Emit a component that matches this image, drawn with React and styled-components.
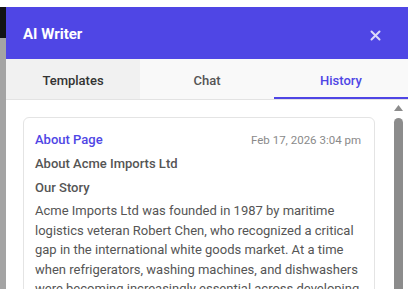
import React, { useState } from 'react';
import styled, { createGlobalStyle } from 'styled-components';

const GlobalStyle = createGlobalStyle`
  html, body {
    margin: 0;
    padding: 0;
    overflow: hidden;
    background: #a4a4a4;
    font-family: Roboto, "Noto Sans", sans-serif;
  }
`;

const tabs = ['Templates', 'Chat', 'History'];

const story =
  'Acme Imports Ltd was founded in 1987 by maritime logistics veteran Robert Chen, who recognized a critical gap in the international white goods market. At a time when refrigerators, washing machines, and dishwashers were becoming increasingly essential across developing markets, reliable supply chains were scarce. Chen set out to build a company that could move appliances from factory floor to retail showroom with speed, care and transparency. Today the business serves partners on four continents, handling thousands of units every month.';

const App = () => {
  const [active, setActive] = useState('History');

  return (
    <>
      <GlobalStyle />
      <Page>
        <TopStrip />
        <Body>
          <SideStrip>
            <AdminBar />
          </SideStrip>
          <Panel>
            <Header>
              <Title>AI Writer</Title>
              <CloseButton aria-label="Close">
                <svg width="11" height="11" viewBox="0 0 11 11">
                  <path d="M1.5 1.5 L9.5 9.5 M9.5 1.5 L1.5 9.5" stroke="currentColor" strokeWidth="2" strokeLinecap="round" />
                </svg>
              </CloseButton>
            </Header>
            <TabBar>
              {tabs.map((t) => (
                <Tab key={t} $active={active === t} $first={t === 'Templates'} onClick={() => setActive(t)}>
                  {t}
                </Tab>
              ))}
            </TabBar>
            <ContentRow>
              <Scroller>
                <Card>
                  <CardHead>
                    <Kind>About Page</Kind>
                    <Stamp>Feb 17, 2026 3:04 pm</Stamp>
                  </CardHead>
                  <Heading>About Acme Imports Ltd</Heading>
                  <Heading>Our Story</Heading>
                  <Paragraph>{story}</Paragraph>
                </Card>
              </Scroller>
              <ScrollRail>
                <svg width="9" height="6" viewBox="0 0 9 6">
                  <path d="M4.5 0 L9 6 L0 6 Z" fill="#8c8c8c" />
                </svg>
                <Thumb />
              </ScrollRail>
            </ContentRow>
          </Panel>
        </Body>
      </Page>
    </>
  );
};

const Page = styled.div`
  display: flex;
  flex-direction: column;
  height: 100vh;
`;

const TopStrip = styled.div`
  height: 7px;
  background: #ffffff;
  flex-shrink: 0;
`;

const Body = styled.div`
  display: flex;
  flex: 1;
  min-height: 0;
`;

const SideStrip = styled.div`
  width: 6px;
  flex-shrink: 0;
  background: #a4a4a4;
`;

const AdminBar = styled.div`
  height: 31px;
  background: #121416;
`;

const Panel = styled.div`
  flex: 1;
  min-width: 0;
  height: 520px;
  flex-shrink: 0;
  display: flex;
  flex-direction: column;
  background: #ffffff;
`;

const Header = styled.div`
  height: 52px;
  flex-shrink: 0;
  display: flex;
  align-items: center;
  justify-content: space-between;
  padding: 0 27px 0 17px;
  background: #4f46e5;
`;

const Title = styled.h2`
  margin: 0;
  font-size: 15px;
  font-weight: 700;
  color: #ffffff;
  padding-top: 2px;
`;

const CloseButton = styled.button`
  border: none;
  background: none;
  padding: 0;
  margin-top: 4px;
  color: #dcdaf8;
  display: flex;
  cursor: pointer;
`;

const TabBar = styled.div`
  display: grid;
  grid-template-columns: 1fr 1fr 1fr;
  height: 40px;
  flex-shrink: 0;
  background: #f9f9f9;
  border-bottom: 1px solid #e3e3e3;
`;

const Tab = styled.button`
  border: none;
  border-bottom: 2px solid ${(p) => (p.$active ? '#4f46e5' : 'transparent')};
  background: ${(p) => (p.$first ? '#f1f1f1' : 'transparent')};
  font-family: inherit;
  font-size: 13px;
  font-weight: 500;
  color: ${(p) => (p.$active ? '#4f46e5' : p.$first ? '#333333' : '#555555')};
  padding: 4px 0 0;
  cursor: pointer;
`;

const ContentRow = styled.div`
  flex: 1;
  min-height: 0;
  display: flex;
`;

const Scroller = styled.div`
  flex: 1;
  min-width: 0;
  overflow: hidden;
  padding: 17px 16px 17px 17px;
`;

const ScrollRail = styled.div`
  width: 17px;
  flex-shrink: 0;
  display: flex;
  flex-direction: column;
  align-items: flex-start;
  padding: 5px 0 0 3px;
  box-sizing: border-box;
  gap: 7px;
`;

const Thumb = styled.div`
  width: 9px;
  flex: 1;
  background: #8c8c8c;
  border-radius: 5px 5px 0 0;
`;

const Card = styled.div`
  border: 1px solid #e4e4e4;
  border-radius: 6px;
  padding: 14px 13px 14px 11px;
`;

const CardHead = styled.div`
  display: flex;
  justify-content: space-between;
  align-items: baseline;
  margin-bottom: 8px;
`;

const Kind = styled.span`
  font-size: 13px;
  font-weight: 500;
  color: #4f46e5;
`;

const Stamp = styled.span`
  font-size: 11.5px;
  color: #8a8a8a;
`;

const Heading = styled.div`
  font-size: 13px;
  font-weight: 500;
  color: #555555;
  line-height: 18px;
  margin-bottom: 6px;
`;

const Paragraph = styled.p`
  margin: -2px 0 0;
  font-size: 13px;
  line-height: 19.5px;
  color: #555555;
`;

export default App;
